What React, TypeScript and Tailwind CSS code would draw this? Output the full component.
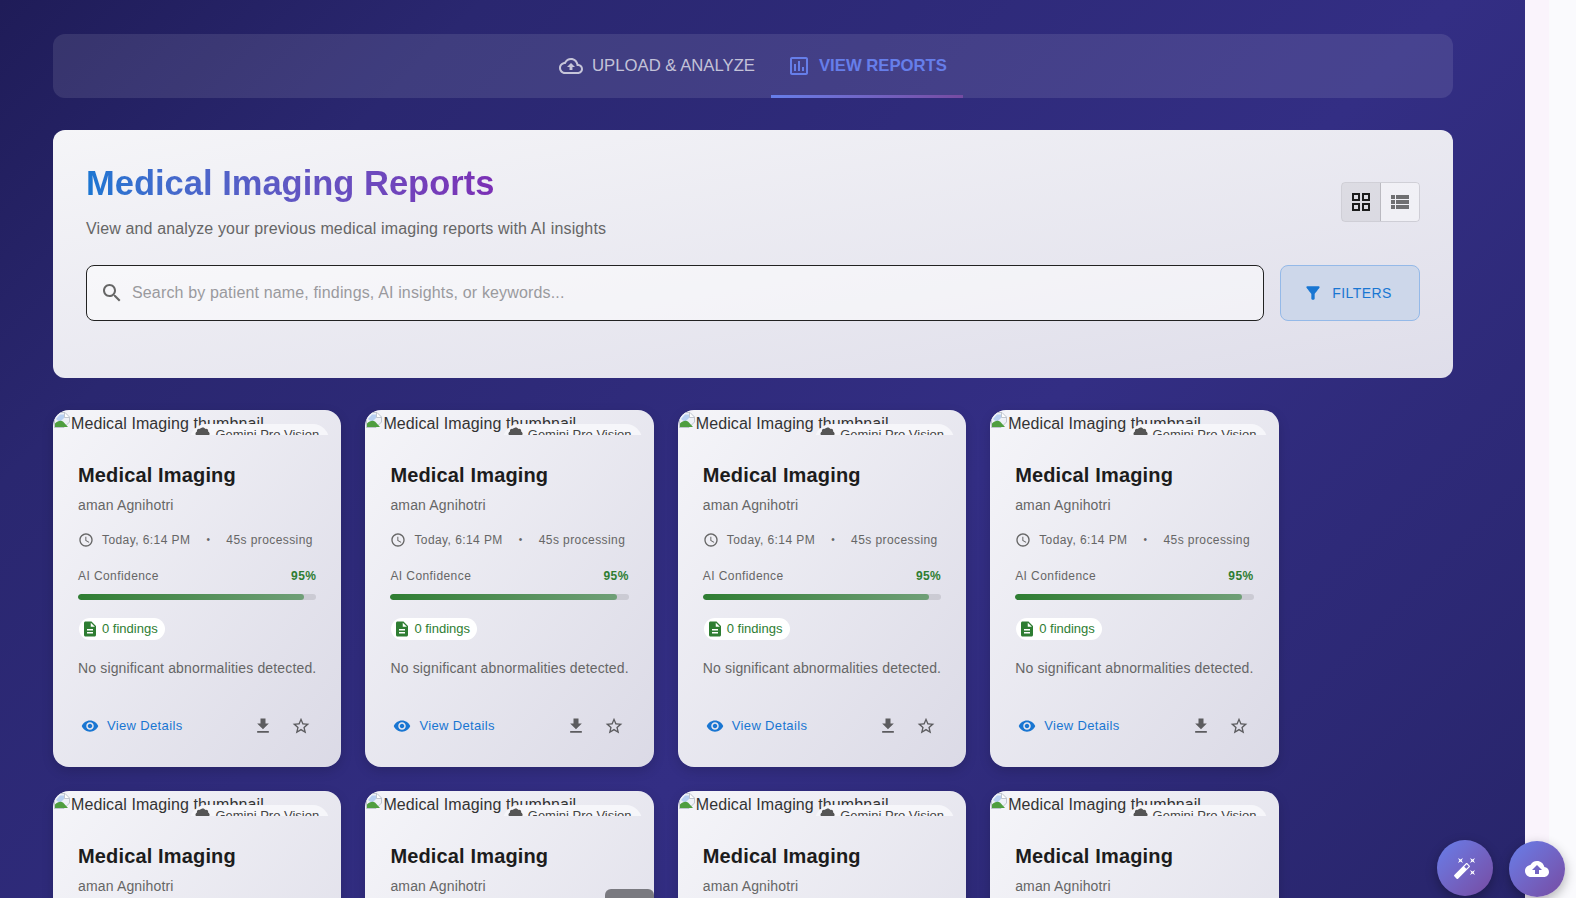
import React from "react"

const paths = {
  cloudOutline: "M19.35 10.04C18.67 6.59 15.64 4 12 4 9.11 4 6.6 5.64 5.35 8.04 2.34 8.36 0 10.91 0 14c0 3.31 2.69 6 6 6h13c2.76 0 5-2.24 5-5 0-2.64-2.05-4.78-4.65-4.96zM19 18H6c-2.21 0-4-1.79-4-4 0-2.05 1.53-3.76 3.56-3.97l1.07-.11.5-.95C8.08 7.14 9.94 6 12 6c2.62 0 4.88 1.86 5.39 4.43l.3 1.5 1.53.11c1.56.1 2.78 1.41 2.78 2.96 0 1.65-1.35 3-3 3zM8 13h2.55v3h2.9v-3H16l-4-4z",
  assessment: "M19 3H5c-1.1 0-2 .9-2 2v14c0 1.1.9 2 2 2h14c1.1 0 2-.9 2-2V5c0-1.1-.9-2-2-2zm0 16H5V5h14v14zM7 10h2v7H7zm4-3h2v10h-2zm4 6h2v4h-2z",
  grid: "M3 3v8h8V3H3zm6 6H5V5h4v4zm-6 4v8h8v-8H3zm6 6H5v-4h4v4zm4-16v8h8V3h-8zm6 6h-4V5h4v4zm-6 4v8h8v-8h-8zm6 6h-4v-4h4v4z",
  list: "M3 14h4v-4H3v4zm0 5h4v-4H3v4zM3 9h4V5H3v4zm5 5h13v-4H8v4zm0 5h13v-4H8v4zM8 5v4h13V5H8z",
  search: "M15.5 14h-.79l-.28-.27C15.41 12.59 16 11.11 16 9.5 16 5.91 13.09 3 9.5 3S3 5.91 3 9.5 5.91 16 9.5 16c1.61 0 3.09-.59 4.23-1.57l.27.28v.79l5 4.99L20.49 19l-4.99-5zm-6 0C7.01 14 5 11.99 5 9.5S7.01 5 9.5 5 14 7.01 14 9.5 11.99 14 9.5 14z",
  filter: "M4.25 5.61C6.27 8.2 10 13 10 13v6c0 .55.45 1 1 1h2c.55 0 1-.45 1-1v-6s3.72-4.8 5.74-7.39c.51-.66.04-1.61-.79-1.61H5.04c-.83 0-1.3.95-.79 1.61z",
  clock: "M11.99 2C6.47 2 2 6.48 2 12s4.47 10 9.99 10C17.52 22 22 17.52 22 12S17.52 2 11.99 2zM12 20c-4.42 0-8-3.58-8-8s3.58-8 8-8 8 3.58 8 8-3.58 8-8 8zm.5-13H11v6l5.25 3.15.75-1.23-4.5-2.67z",
  doc: "M14 2H6c-1.1 0-1.99.9-1.99 2L4 20c0 1.1.89 2 1.99 2H18c1.1 0 2-.9 2-2V8l-6-6zm2 16H8v-2h8v2zm0-4H8v-2h8v2zm-3-5V3.5L18.5 9H13z",
  eye: "M12 4.5C7 4.5 2.73 7.61 1 12c1.73 4.39 6 7.5 11 7.5s9.27-3.11 11-7.5c-1.73-4.39-6-7.5-11-7.5zM12 17c-2.76 0-5-2.24-5-5s2.24-5 5-5 5 2.24 5 5-2.24 5-5 5zm0-8c-1.66 0-3 1.34-3 3s1.34 3 3 3 3-1.34 3-3-1.34-3-3-3z",
  download: "M19 9h-4V3H9v6H5l7 7 7-7zM5 18v2h14v-2H5z",
  star: "M22 9.24l-7.19-.62L12 2 9.19 8.63 2 9.24l5.46 4.73L5.82 21 12 17.27 18.18 21l-1.63-7.03L22 9.24zM12 15.4l-3.76 2.27 1-4.28-3.32-2.88 4.38-.38L12 6.1l1.71 4.04 4.38.38-3.32 2.88 1 4.28L12 15.4z",
  wand: "M7.5 5.6L10 7 8.6 4.5 10 2 7.5 3.4 5 2l1.4 2.5L5 7zm12 9.8L17 14l1.4 2.5L17 19l2.5-1.4L22 19l-1.4-2.5L22 14zM22 2l-2.5 1.4L17 2l1.4 2.5L17 7l2.5-1.4L22 7l-1.4-2.5zm-7.63 5.29c-.39-.39-1.02-.39-1.41 0L1.29 18.96c-.39.39-.39 1.02 0 1.41l2.34 2.34c.39.39 1.02.39 1.41 0L16.7 11.05c.39-.39.39-1.02 0-1.41l-2.33-2.35zm-1.03 5.49l-2.12-2.12 2.44-2.44 2.12 2.12-2.44 2.44z",
  cloud: "M19.35 10.04C18.67 6.59 15.64 4 12 4 9.11 4 6.6 5.64 5.35 8.04 2.34 8.36 0 10.91 0 14c0 3.31 2.69 6 6 6h13c2.76 0 5-2.24 5-5 0-2.64-2.05-4.78-4.65-4.96zM14 13v4h-4v-4H7l5-5 5 5h-3z",
  // bumpy chip icon, only its top shows under the clip
  chip: "M12 3c1.2 0 2.1.7 2.6 1.7.9-.5 2.1-.4 2.9.4.7.7.9 1.7.5 2.6 1.1.4 1.9 1.5 1.9 2.7 0 1-.5 1.9-1.3 2.4H21v9H3v-9h1.4C3.6 12.4 3 11.5 3 10.4c0-1.2.8-2.3 1.9-2.7-.4-.9-.2-1.9.5-2.6.8-.8 2-.9 2.9-.4C8.9 3.7 10.8 3 12 3z",
}

function Icon({ d, className }: { d: string; className: string }) {
  return (
    <svg viewBox="0 0 24 24" className={className} fill="currentColor">
      <path d={d} />
    </svg>
  )
}

function BrokenImage() {
  return (
    <svg viewBox="0 0 16 16" className="w-4 h-4 shrink-0 mt-[2px] ml-[1px] mr-[1px]">
      <path d="M0.5 15.5V5L5 0.5h6L15.5 5v5L10 15.5z" fill="#eef1f7" stroke="#aab2bd" strokeWidth="0.7" />
      <path d="M2 7l4-4.5h4v3.5l-4 4z" fill="#b8d0f2" />
      <path d="M1 15v-3.5C3.5 9 6.5 8 9 9.5L14 15z" fill="#4f9e3f" />
      <path d="M10.5 1v4.5H15" fill="#fff" stroke="#aab2bd" strokeWidth="0.7" />
    </svg>
  )
}

function ReportCard() {
  return (
    <div className="w-[288.4px] h-[357px] rounded-[16px] overflow-hidden bg-gradient-to-br from-[#f5f5f9] to-[#dbdae6] shadow-[0_4px_12px_rgba(0,0,0,0.15)]">
      {/* broken thumbnail, clipped */}
      <div className="relative h-[25px] overflow-hidden flex items-start text-[16px] leading-[22px] tracking-[0.1px] text-[#333]">
        <BrokenImage />
        <span className="whitespace-nowrap pt-[3px]">Medical Imaging thumbnail</span>
        <div className="absolute top-[14px] right-[12px] w-[139px] h-[32px] rounded-full bg-[#f6f6fa] flex items-start pl-[3px] pt-[2px] gap-[2px] text-[13px] leading-[18px] tracking-normal text-[#444]">
          <Icon d={paths.chip} className="w-[20px] h-[20px] -mt-[1px] text-[#555]" />
          <span className="whitespace-nowrap">Gemini Pro Vision</span>
        </div>
      </div>

      <div className="px-[25px] pt-[26px]">
        <h3 className="text-[20px] leading-[28px] font-bold tracking-[0.15px] text-[#1c1c1c]">Medical Imaging</h3>
        <p className="mt-[6px] text-[14px] leading-[20px] tracking-[0.15px] text-[#666]">aman Agnihotri</p>

        <div className="mt-[15px] flex items-center text-[12px] leading-[20px] tracking-[0.42px] text-[#666]">
          <Icon d={paths.clock} className="w-[16px] h-[16px] mr-[8px]" />
          <span>Today, 6:14 PM</span>
          <span className="mx-[16px] text-[10px]">•</span>
          <span>45s processing</span>
        </div>

        <div className="mt-[16px] flex items-center justify-between text-[12px] leading-[20px] tracking-[0.42px] text-[#666]">
          <span>AI Confidence</span>
          <span className="font-semibold text-[#2e7d32]">95%</span>
        </div>
        <div className="mt-[8px] h-[6px] rounded-full bg-black/10 overflow-hidden">
          <div className="h-full w-[95%] rounded-full bg-gradient-to-r from-[#2e7d32] to-[#6f9f77]" />
        </div>

        <div className="mt-[18px] inline-flex items-center h-[22px] w-[86px] ml-[1px] rounded-full bg-white pl-[2px] text-[13px] text-[#2e7d32]">
          <Icon d={paths.doc} className="w-[18px] h-[18px] mr-[3px]" />
          <span className="whitespace-nowrap">0 findings</span>
        </div>

        <p className="mt-[13px] text-[14px] leading-[20px] tracking-[0.15px] whitespace-nowrap text-[#666]">No significant abnormalities detected.</p>

        <div className="mt-[38px] flex items-center justify-between">
          <div className="flex items-center text-[13px] tracking-[0.35px] text-[#1976d2] ml-[3px]">
            <Icon d={paths.eye} className="w-[18px] h-[18px] mr-[8px]" />
            View Details
          </div>
          <div className="flex items-center gap-[18px] pr-[5px] text-[#5c5c5f]">
            <Icon d={paths.download} className="w-[20px] h-[20px]" />
            <Icon d={paths.star} className="w-[20px] h-[20px]" />
          </div>
        </div>
      </div>
    </div>
  )
}

export default function App() {
  return (
    <div className="relative flex h-[898px] overflow-hidden font-['Liberation_Sans',Arial,sans-serif]">
      <main className="w-[1525px] shrink-0 px-[53px] pt-[34px] bg-[linear-gradient(135deg,#1f1c58_0%,#2a2770_20%,#332e84_60%,#28256b_100%)]">
        {/* Tabs */}
        <div className="w-[1400px] h-[64px] rounded-[12px] bg-white/10 flex justify-center text-[16.7px]">
          <div className="flex items-center px-[16px] pb-[1px] text-white/70">
            <Icon d={paths.cloudOutline} className="w-[24px] h-[24px] mr-[9px]" />
            UPLOAD &amp; ANALYZE
          </div>
          <div className="relative flex items-center px-[16px] pb-[1px] font-bold text-[#667eea]">
            <Icon d={paths.assessment} className="w-[24px] h-[24px] mr-[8px]" />
            VIEW REPORTS
            <div className="absolute left-0 right-0 bottom-0 h-[3px] bg-gradient-to-r from-[#667eea] to-[#764ba2]" />
          </div>
        </div>

        {/* Header panel */}
        <section className="mt-[32px] w-[1400px] h-[248px] rounded-[12px] bg-gradient-to-br from-[#f5f5f8] to-[#dfdeea] px-[33px] pt-[27px]">
          <div className="flex items-center justify-between h-[93px]">
            <div className="-mt-[6px]">
              <h1 className="text-[34.5px] leading-[44px] font-bold bg-gradient-to-r from-[#1976d2] to-[#7b2fb5] bg-clip-text text-transparent w-fit">Medical Imaging Reports</h1>
              <p className="mt-[12px] text-[16px] leading-[24px] tracking-[0.14px] text-[#666]">View and analyze your previous medical imaging reports with AI insights</p>
            </div>
            <div className="flex h-[40px] mt-[-3px] rounded-[4px] border border-black/10 overflow-hidden">
              <div className="w-[39px] flex items-center justify-center bg-black/5 border-r border-black/15 text-[#1c1c1c]">
                <Icon d={paths.grid} className="w-[24px] h-[24px]" />
              </div>
              <div className="w-[38px] flex items-center justify-center bg-white/40 text-[#6f6f72]">
                <Icon d={paths.list} className="w-[24px] h-[24px]" />
              </div>
            </div>
          </div>
          <div className="mt-[15px] flex gap-[16px]">
            <div className="flex-1 h-[56px] rounded-[8px] border border-[#222] bg-white/50 flex items-center pl-[13px] text-[16px] tracking-[0.15px] text-[#9a9a9e]">
              <Icon d={paths.search} className="w-[24px] h-[24px] mr-[8px] text-[#666]" />
              Search by patient name, findings, AI insights, or keywords...
            </div>
            <div className="w-[140px] h-[56px] rounded-[8px] border border-[#94b9e8] bg-[#cdd7ea] flex items-center justify-center pr-[5px] text-[14px] tracking-[0.4px] text-[#1976d2]">
              <Icon d={paths.filter} className="w-[20px] h-[20px] mr-[9px]" />
              FILTERS
            </div>
          </div>
        </section>

        {/* Cards */}
        <div className="mt-[32px] grid grid-cols-[repeat(4,288.4px)] gap-x-[24px] gap-y-[24px]">
          {Array.from({ length: 8 }).map((_, i) => (
            <ReportCard key={i} />
          ))}
        </div>
      </main>
      <div className="w-[24px] bg-[#faf4fc]" />
      <div className="flex-1 bg-[#fafafd]" />

      {/* Overlays */}
      <div className="absolute left-[605px] top-[889px] w-[49px] h-[14px] rounded-[6px] bg-[#7a7a80]" />
      <div className="absolute left-[1437px] top-[840px] w-[56px] h-[56px] rounded-full bg-gradient-to-br from-[#667eea] to-[#764ba2] flex items-center justify-center text-white shadow-[0_4px_12px_rgba(0,0,0,0.3)]">
        <Icon d={paths.wand} className="w-[24px] h-[24px]" />
      </div>
      <div className="absolute left-[1509px] top-[841px] w-[56px] h-[56px] rounded-full bg-gradient-to-br from-[#667eea] to-[#764ba2] flex items-center justify-center text-white shadow-[0_4px_12px_rgba(0,0,0,0.3)]">
        <Icon d={paths.cloud} className="w-[24px] h-[24px]" />
      </div>
    </div>
  )
}
